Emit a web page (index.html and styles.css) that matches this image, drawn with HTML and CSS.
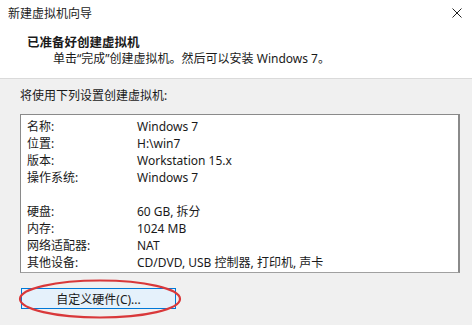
FILE: index.html
```html
<!DOCTYPE html>
<html lang="zh-CN">
<head>
  <meta charset="UTF-8">
  <title>新建虚拟机向导</title>
  <link rel="stylesheet" href="styles.css">
</head>
<body>
  <div class="wizard">
    <div class="header">
      <div class="titlebar">
        <span class="title">新建虚拟机向导</span>
        <span class="close">
          <svg width="10" height="10" viewBox="0 0 10 10"><path d="M0.5 0.5 L9.5 9.5 M9.5 0.5 L0.5 9.5" stroke="#222" stroke-width="1" fill="none"/></svg>
        </span>
      </div>
      <div class="heading">已准备好创建虚拟机</div>
      <div class="sub">单击“完成”创建虚拟机。然后可以安装 Windows 7。</div>
    </div>

    <div class="content">
      <div class="intro">将使用下列设置创建虚拟机:</div>
      <div class="summary">
        <div class="row"><span class="label">名称:</span><span class="value">Windows 7</span></div>
        <div class="row"><span class="label">位置:</span><span class="value">H:\win7</span></div>
        <div class="row"><span class="label">版本:</span><span class="value">Workstation 15.x</span></div>
        <div class="row"><span class="label">操作系统:</span><span class="value">Windows 7</span></div>
        <div class="row"></div>
        <div class="row"><span class="label">硬盘:</span><span class="value">60 GB, 拆分</span></div>
        <div class="row"><span class="label">内存:</span><span class="value">1024 MB</span></div>
        <div class="row"><span class="label">网络适配器:</span><span class="value">NAT</span></div>
        <div class="row"><span class="label">其他设备:</span><span class="value">CD/DVD, USB 控制器, 打印机, 声卡</span></div>
      </div>

      <div class="btn-wrap">
        <button class="btn">自定义硬件(C)...</button>
        <!-- 红色圈注 -->
        <svg class="mark" width="166" height="44" viewBox="0 0 166 44">
          <ellipse cx="82" cy="21" rx="80" ry="18.5" fill="none" stroke="#d9383a" stroke-width="2.2"/>
        </svg>
      </div>
    </div>
  </div>
</body>
</html>
```

FILE: styles.css
```css
* {
  margin: 0;
  padding: 0;
  box-sizing: border-box;
}

body {
  background: #f0f0f0;
  font-family: "Noto Sans", "Noto Sans CJK SC", sans-serif;
  font-size: 12px;
  color: #1a1a1a;
  width: 472px;
  height: 325px;
  overflow: hidden;
}

.header {
  background: #fff;
  height: 79px;
  border-bottom: 1px solid #dadada;
}

.titlebar {
  height: 25px;
  display: flex;
  justify-content: space-between;
  align-items: center;
  padding: 0 10px 0 8px;
}

.title {
  font-size: 12px;
  color: #222;
}

.close {
  display: flex;
}

.heading {
  font-weight: bold;
  font-size: 12.5px;
  padding-left: 27px;
  line-height: 17px;
  margin-top: 9px;
}

.sub {
  padding-left: 53px;
  line-height: 16px;
}

.content {
  padding: 0 12px 0 20px;
}

.intro {
  line-height: 17px;
  margin-top: 8px;
}

.summary {
  margin-top: 10px;
  height: 159px;
  background: #fff;
  border: 1px solid #8a8a8a;
  border-right-width: 2px;
  border-bottom-color: #a0a0a0;
  padding: 3px 0 0 6px;
}

.row {
  display: flex;
  height: 17px;
  line-height: 17px;
}

.label {
  width: 110px;
}

.btn-wrap {
  position: relative;
  margin-top: 15px;
  padding-left: 1px;
}

.btn {
  display: block;
  width: 155px;
  height: 21px;
  border: 1px solid #0078d7;
  background: #e5f1fb;
  font-family: inherit;
  font-size: 12px;
  color: #1a1a1a;
}

.mark {
  position: absolute;
  left: -2px;
  top: -10px;
  pointer-events: none;
}
```
